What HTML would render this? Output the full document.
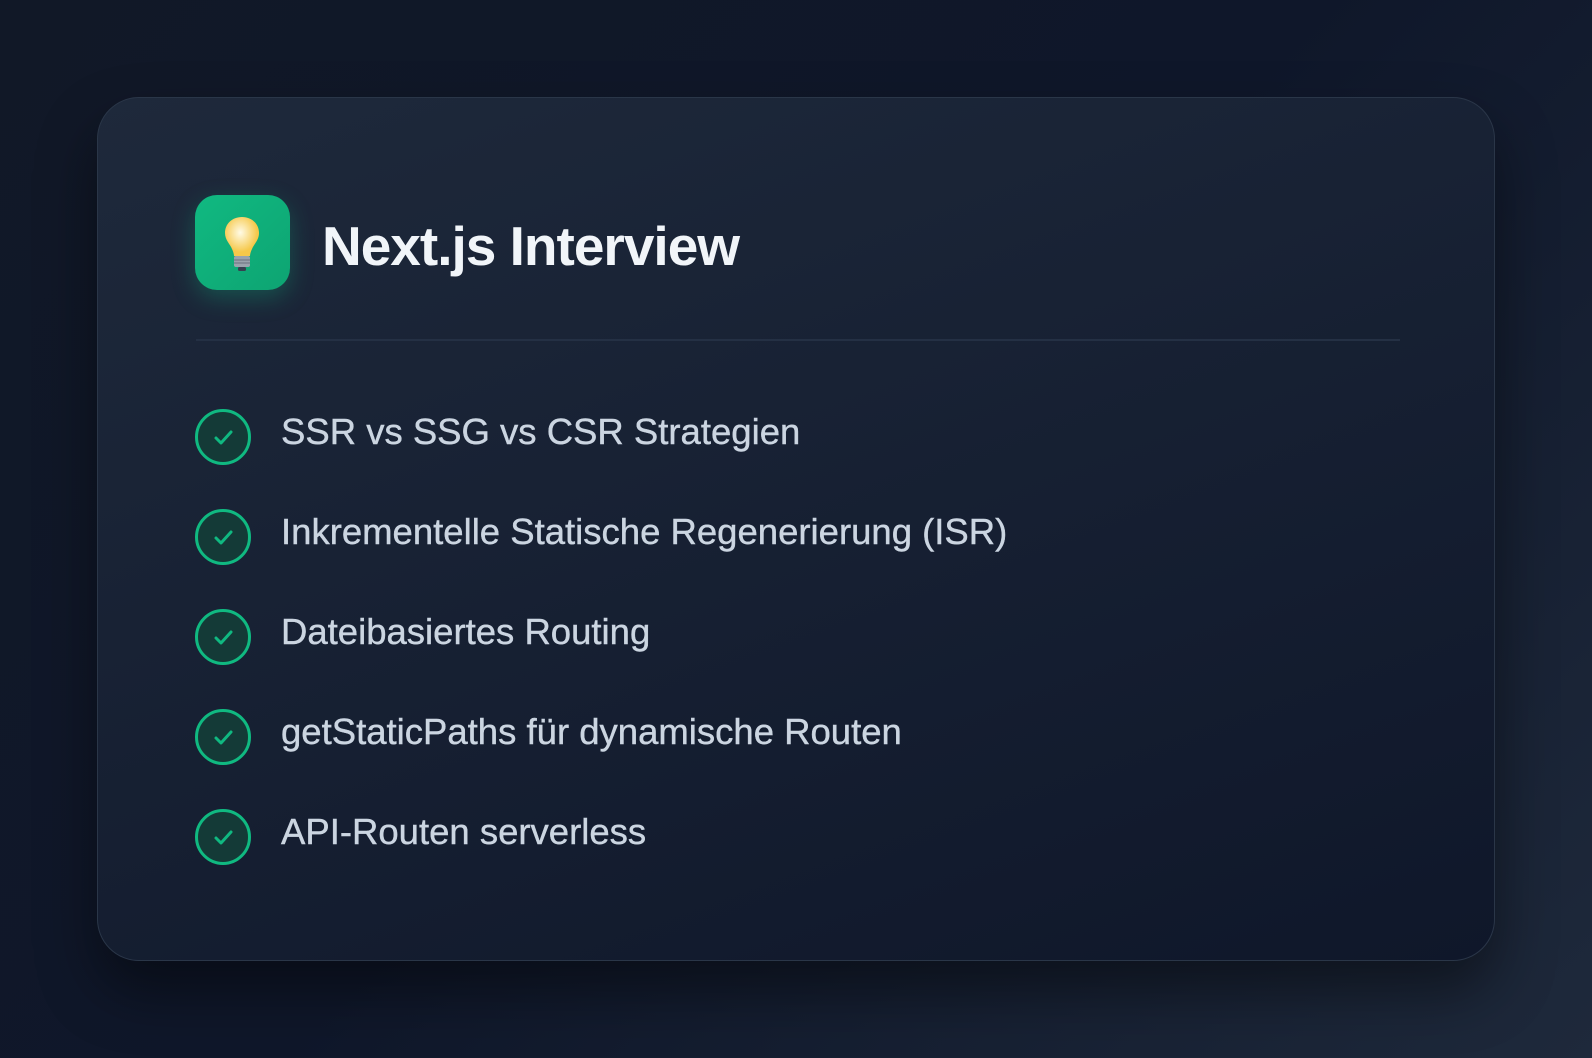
<!DOCTYPE html>
<html><head><style>
html,body{margin:0;width:1592px;height:1058px;overflow:hidden;}
body{background:linear-gradient(135deg,#111827 0%,#0f172a 50%,#1e293b 100%);font-family:"Liberation Sans",sans-serif;position:relative;}
.card{position:absolute;left:97px;top:97px;width:1398px;height:864px;border-radius:42px;background:linear-gradient(160deg,#1e293b 0%,#0f172a 100%);border:1px solid #2a3648;box-sizing:border-box;box-shadow:0 30px 60px rgba(0,0,0,0.45);}
.icon{position:absolute;left:97px;top:97px;width:95px;height:95px;border-radius:22px;background:linear-gradient(135deg,#10b981,#0ea472);box-shadow:0 8px 24px rgba(16,185,129,0.3);}
.title{position:absolute;left:224px;top:108px;font-size:55px;font-weight:bold;color:#f1f5f9;letter-spacing:-1px;line-height:80px;}
.div{position:absolute;left:98px;top:241px;width:1204px;height:2px;background:#243044;}
.item{position:absolute;left:97px;height:56px;}
.c{position:absolute;left:0;top:0;width:50px;height:50px;border:3px solid #10b981;border-radius:50%;background:#143a37;}
.t{position:absolute;left:86px;font-size:36.5px;color:#cbd5e1;white-space:nowrap;line-height:56px;top:-5px;-webkit-text-stroke:0.4px #cbd5e1;}
</style></head><body>
<div class="card">
<div class="icon"><svg width="95" height="95" viewBox="0 0 95 95">
<defs><radialGradient id="g" cx="0.45" cy="0.4"><stop offset="0" stop-color="#fffbe6"/><stop offset="1" stop-color="#f6c84a"/></radialGradient></defs>
<path d="M47 22c-10 0-17 7-17 16 0 7 5 11 7 16 1 2 2 5 2 7h16c0-2 1-5 2-7 2-5 7-9 7-16 0-9-7-16-17-16z" fill="url(#g)"/>
<rect x="39" y="61" width="16" height="11" rx="2" fill="#9aa3ad"/>
<path d="M39 65h16M39 68h16" stroke="#6b7280" stroke-width="1"/>
<rect x="43" y="72" width="8" height="4" rx="1.5" fill="#374151"/>
</svg></div>
<div class="title">Next.js Interview</div>
<div class="div"></div>
<div class="item" style="top:311px"><div class="c"><svg width="50" height="50"><path d="M18 26l5 5 10-11" fill="none" stroke="#10b981" stroke-width="3" stroke-linecap="round" stroke-linejoin="round"/></svg></div><div class="t">SSR vs SSG vs CSR Strategien</div></div>
<div class="item" style="top:411px"><div class="c"><svg width="50" height="50"><path d="M18 26l5 5 10-11" fill="none" stroke="#10b981" stroke-width="3" stroke-linecap="round" stroke-linejoin="round"/></svg></div><div class="t">Inkrementelle Statische Regenerierung (ISR)</div></div>
<div class="item" style="top:511px"><div class="c"><svg width="50" height="50"><path d="M18 26l5 5 10-11" fill="none" stroke="#10b981" stroke-width="3" stroke-linecap="round" stroke-linejoin="round"/></svg></div><div class="t">Dateibasiertes Routing</div></div>
<div class="item" style="top:611px"><div class="c"><svg width="50" height="50"><path d="M18 26l5 5 10-11" fill="none" stroke="#10b981" stroke-width="3" stroke-linecap="round" stroke-linejoin="round"/></svg></div><div class="t">getStaticPaths für dynamische Routen</div></div>
<div class="item" style="top:711px"><div class="c"><svg width="50" height="50"><path d="M18 26l5 5 10-11" fill="none" stroke="#10b981" stroke-width="3" stroke-linecap="round" stroke-linejoin="round"/></svg></div><div class="t">API-Routen serverless</div></div>
</div>
</body></html>
